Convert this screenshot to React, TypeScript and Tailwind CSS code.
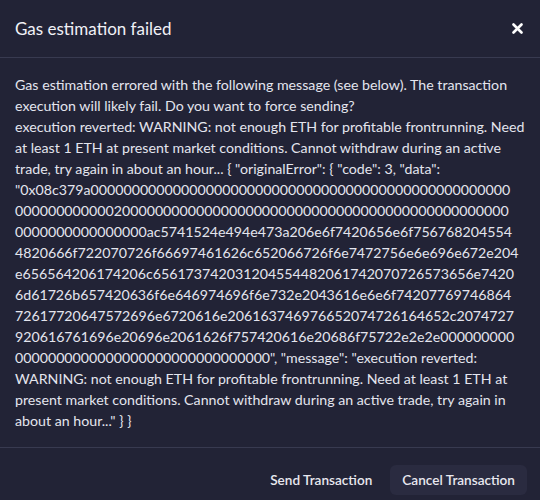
import React from 'react';

const revertMessage =
  'WARNING: not enough ETH for profitable frontrunning. Need at least 1 ETH at present market conditions. Cannot withdraw during an active trade, try again in about an hour...';

// abi-encoded Error(string) payload, built from the revert message
function encodeError(msg: string) {
  const hex = Array.from(msg)
    .map((c) => c.charCodeAt(0).toString(16).padStart(2, '0'))
    .join('');
  const len = msg.length.toString(16).padStart(64, '0');
  const offset = '20'.padStart(64, '0');
  const padded = hex.padEnd(Math.ceil(hex.length / 64) * 64, '0');
  return '0x08c379a0' + offset + len + padded;
}

// where the long hex string wraps in the dialog
const hexRows = [60, 60, 62, 63, 61, 62, 61, 62];

function splitHex(data: string) {
  const parts: string[] = [];
  let pos = 0;
  for (const n of hexRows) {
    parts.push(data.slice(pos, pos + n));
    pos += n;
  }
  parts.push(data.slice(pos));
  return parts;
}

function CloseIcon() {
  return (
    <svg width="11" height="11" viewBox="0 0 11 11" fill="none">
      <path d="M1.5 1.5L9.5 9.5M9.5 1.5L1.5 9.5" stroke="white" strokeWidth="2.6" strokeLinecap="round" />
    </svg>
  );
}

export default function App() {
  const parts = splitHex(encodeError(revertMessage));
  parts[0] = '"' + parts[0];
  parts[parts.length - 1] += `", "message": "execution reverted: ${revertMessage}" } }`;
  const head = `execution reverted: ${revertMessage} { "originalError": { "code": 3, "data": `;

  return (
    <div className="min-h-screen bg-[#222336] font-['Lato',sans-serif] text-[#e4e5ee]">
      <div className="flex h-[58px] items-center justify-between border-b border-[#383a50] pl-[15px] pr-[13px]">
        <h2 className="text-[17px] font-normal text-[#f1f1f6]">Gas estimation failed</h2>
        <button className="flex h-5 w-5 items-center justify-center" title="Close">
          <CloseIcon />
        </button>
      </div>

      <div className="px-[15px] pb-[16px] pt-[16px] text-[14.2px] leading-[21px] break-words">
        Gas estimation errored with the following message (see below). The transaction execution will likely
        fail. Do you want to force sending?
        <br />
        {head}
        {parts.map((p, i) => (
          <React.Fragment key={i}>
            {i > 0 && <wbr />}
            {p}
          </React.Fragment>
        ))}
      </div>

      <div className="flex justify-end gap-[6px] border-t border-[#383a50] pr-[13px] pt-[17px]">
        <button className="h-[30px] rounded-md px-3 text-[13.6px] font-semibold text-[#e8e8ef]">
          Send Transaction
        </button>
        <button className="h-[30px] rounded-md bg-[#2a2b40] px-3 text-[13.6px] font-semibold text-[#e8e8ef]">
          Cancel Transaction
        </button>
      </div>
    </div>
  );
}
